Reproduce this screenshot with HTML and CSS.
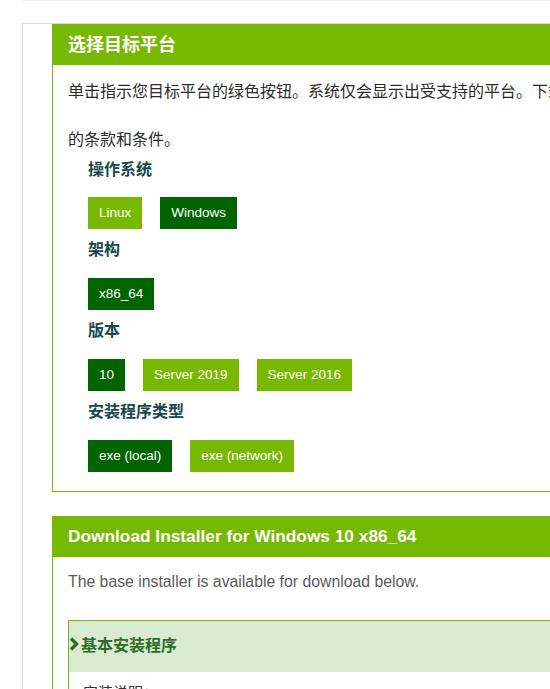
FILE: index.html
```html
<!DOCTYPE html>
<html lang="zh-CN">
<head>
<meta charset="utf-8">
<title>CUDA Toolkit 下载</title>
<link rel="stylesheet" href="styles.css">
</head>
<body>
<div class="top-line"></div>
<div class="outer">
  <section class="panel">
    <h2 class="panel-head">选择目标平台</h2>
    <div class="panel-body">
      <p class="intro">单击指示您目标平台的绿色按钮。系统仅会显示出受支持的平台。下载并使用此软件即表示您同意 CUDA EULA<br>的条款和条件。</p>
      <div class="group">
        <div class="label">操作系统</div>
        <div class="btns">
          <span class="btn light">Linux</span>
          <span class="btn dark">Windows</span>
        </div>
      </div>
      <div class="group">
        <div class="label">架构</div>
        <div class="btns">
          <span class="btn dark">x86_64</span>
        </div>
      </div>
      <div class="group">
        <div class="label">版本</div>
        <div class="btns">
          <span class="btn dark">10</span>
          <span class="btn light">Server 2019</span>
          <span class="btn light">Server 2016</span>
        </div>
      </div>
      <div class="group">
        <div class="label">安装程序类型</div>
        <div class="btns">
          <span class="btn dark">exe (local)</span>
          <span class="btn light">exe (network)</span>
        </div>
      </div>
    </div>
  </section>

  <section class="panel second">
    <h2 class="panel-head en">Download Installer for Windows 10 x86_64</h2>
    <div class="panel-body">
      <p class="note">The base installer is available for download below.</p>
      <div class="box">
        <div class="box-head">
          <svg class="chev" width="10" height="14" viewBox="0 0 10 14"><path d="M2 1.5 L7.5 7 L2 12.5" fill="none" stroke="#2f6b2a" stroke-width="3.4"/></svg>
          <span>基本安装程序</span>
        </div>
        <div class="box-body">安装说明：</div>
      </div>
    </div>
  </section>
</div>
</body>
</html>
```
FILE: styles.css
```css
html, body {
  margin: 0;
  padding: 0;
  overflow: hidden;
  background: #fff;
}
body {
  font-family: "Liberation Sans", "Noto Sans CJK SC", sans-serif;
  color: #333;
}
.top-line {
  height: 1px;
  margin-left: 22px;
  background: #f2f2f2;
}
.outer {
  margin-top: 22px;
  margin-left: 22px;
  border-left: 1px solid #dcdcdc;
  border-top: 1px solid #dcdcdc;
  padding-left: 29px;
  height: 700px;
  overflow: hidden;
}
.panel {
  width: 900px;
  border: 1px solid #76b900;
  border-top: none;
  box-sizing: border-box;
}
.panel-head {
  margin: 0 0 0 -1px;
  height: 41px;
  line-height: 39px;
  background: #76b900;
  color: #fff;
  font-size: 18px;
  font-weight: bold;
  padding-left: 16px;
  font-family: "Noto Sans CJK SC", sans-serif;
}
.panel-head.en {
  font-family: "Liberation Sans", sans-serif;
  font-size: 17.3px;
  line-height: 40px;
}
.panel-body {
  padding: 1px 15px 19px;
}
.intro {
  margin: 0;
  font-size: 16px;
  line-height: 48px;
  white-space: nowrap;
  font-family: "Noto Sans CJK SC", sans-serif;
  color: #2b2b2b;
}
.group {
  padding-left: 20px;
}
.label {
  margin-top: 11px;
  font-size: 16px;
  line-height: 16px;
  font-weight: bold;
  color: #17494b;
  font-family: "Noto Sans CJK SC", sans-serif;
}
.group:first-of-type .label {
  margin-top: -2px;
}
.btns {
  display: flex;
  gap: 18px;
  margin-top: 21px;
}
.group:not(:first-of-type) .btns {
  margin-top: 22px;
}
.btn {
  height: 32px;
  line-height: 32px;
  padding: 0 11px;
  font-size: 13.5px;
  color: #fff;
}
.btn.light { background: #76b900; }
.btn.dark { background: #006400; }

.second {
  margin-top: 24px;
}
.second .panel-body {
  padding: 13px 0 40px 15px;
}
.note {
  margin: 0;
  font-size: 15.8px;
  line-height: 24px;
  color: #5a5a5a;
}
.box {
  margin-top: 26px;
  border-left: 1px solid #76b900;
  border-top: 1px solid #76b900;
}
.box-head {
  display: flex;
  align-items: center;
  gap: 2px;
  background: #d9ecd2;
  padding: 11px 0 16px 0;
  line-height: 24px;
  font-size: 16px;
  font-weight: bold;
  color: #2f6b2a;
  font-family: "Noto Sans CJK SC", sans-serif;
}
.chev {
  flex: none;
}
.box-body {
  padding: 8px 14px;
  font-size: 15px;
  line-height: 24px;
  font-family: "Noto Sans CJK SC", sans-serif;
}
```
